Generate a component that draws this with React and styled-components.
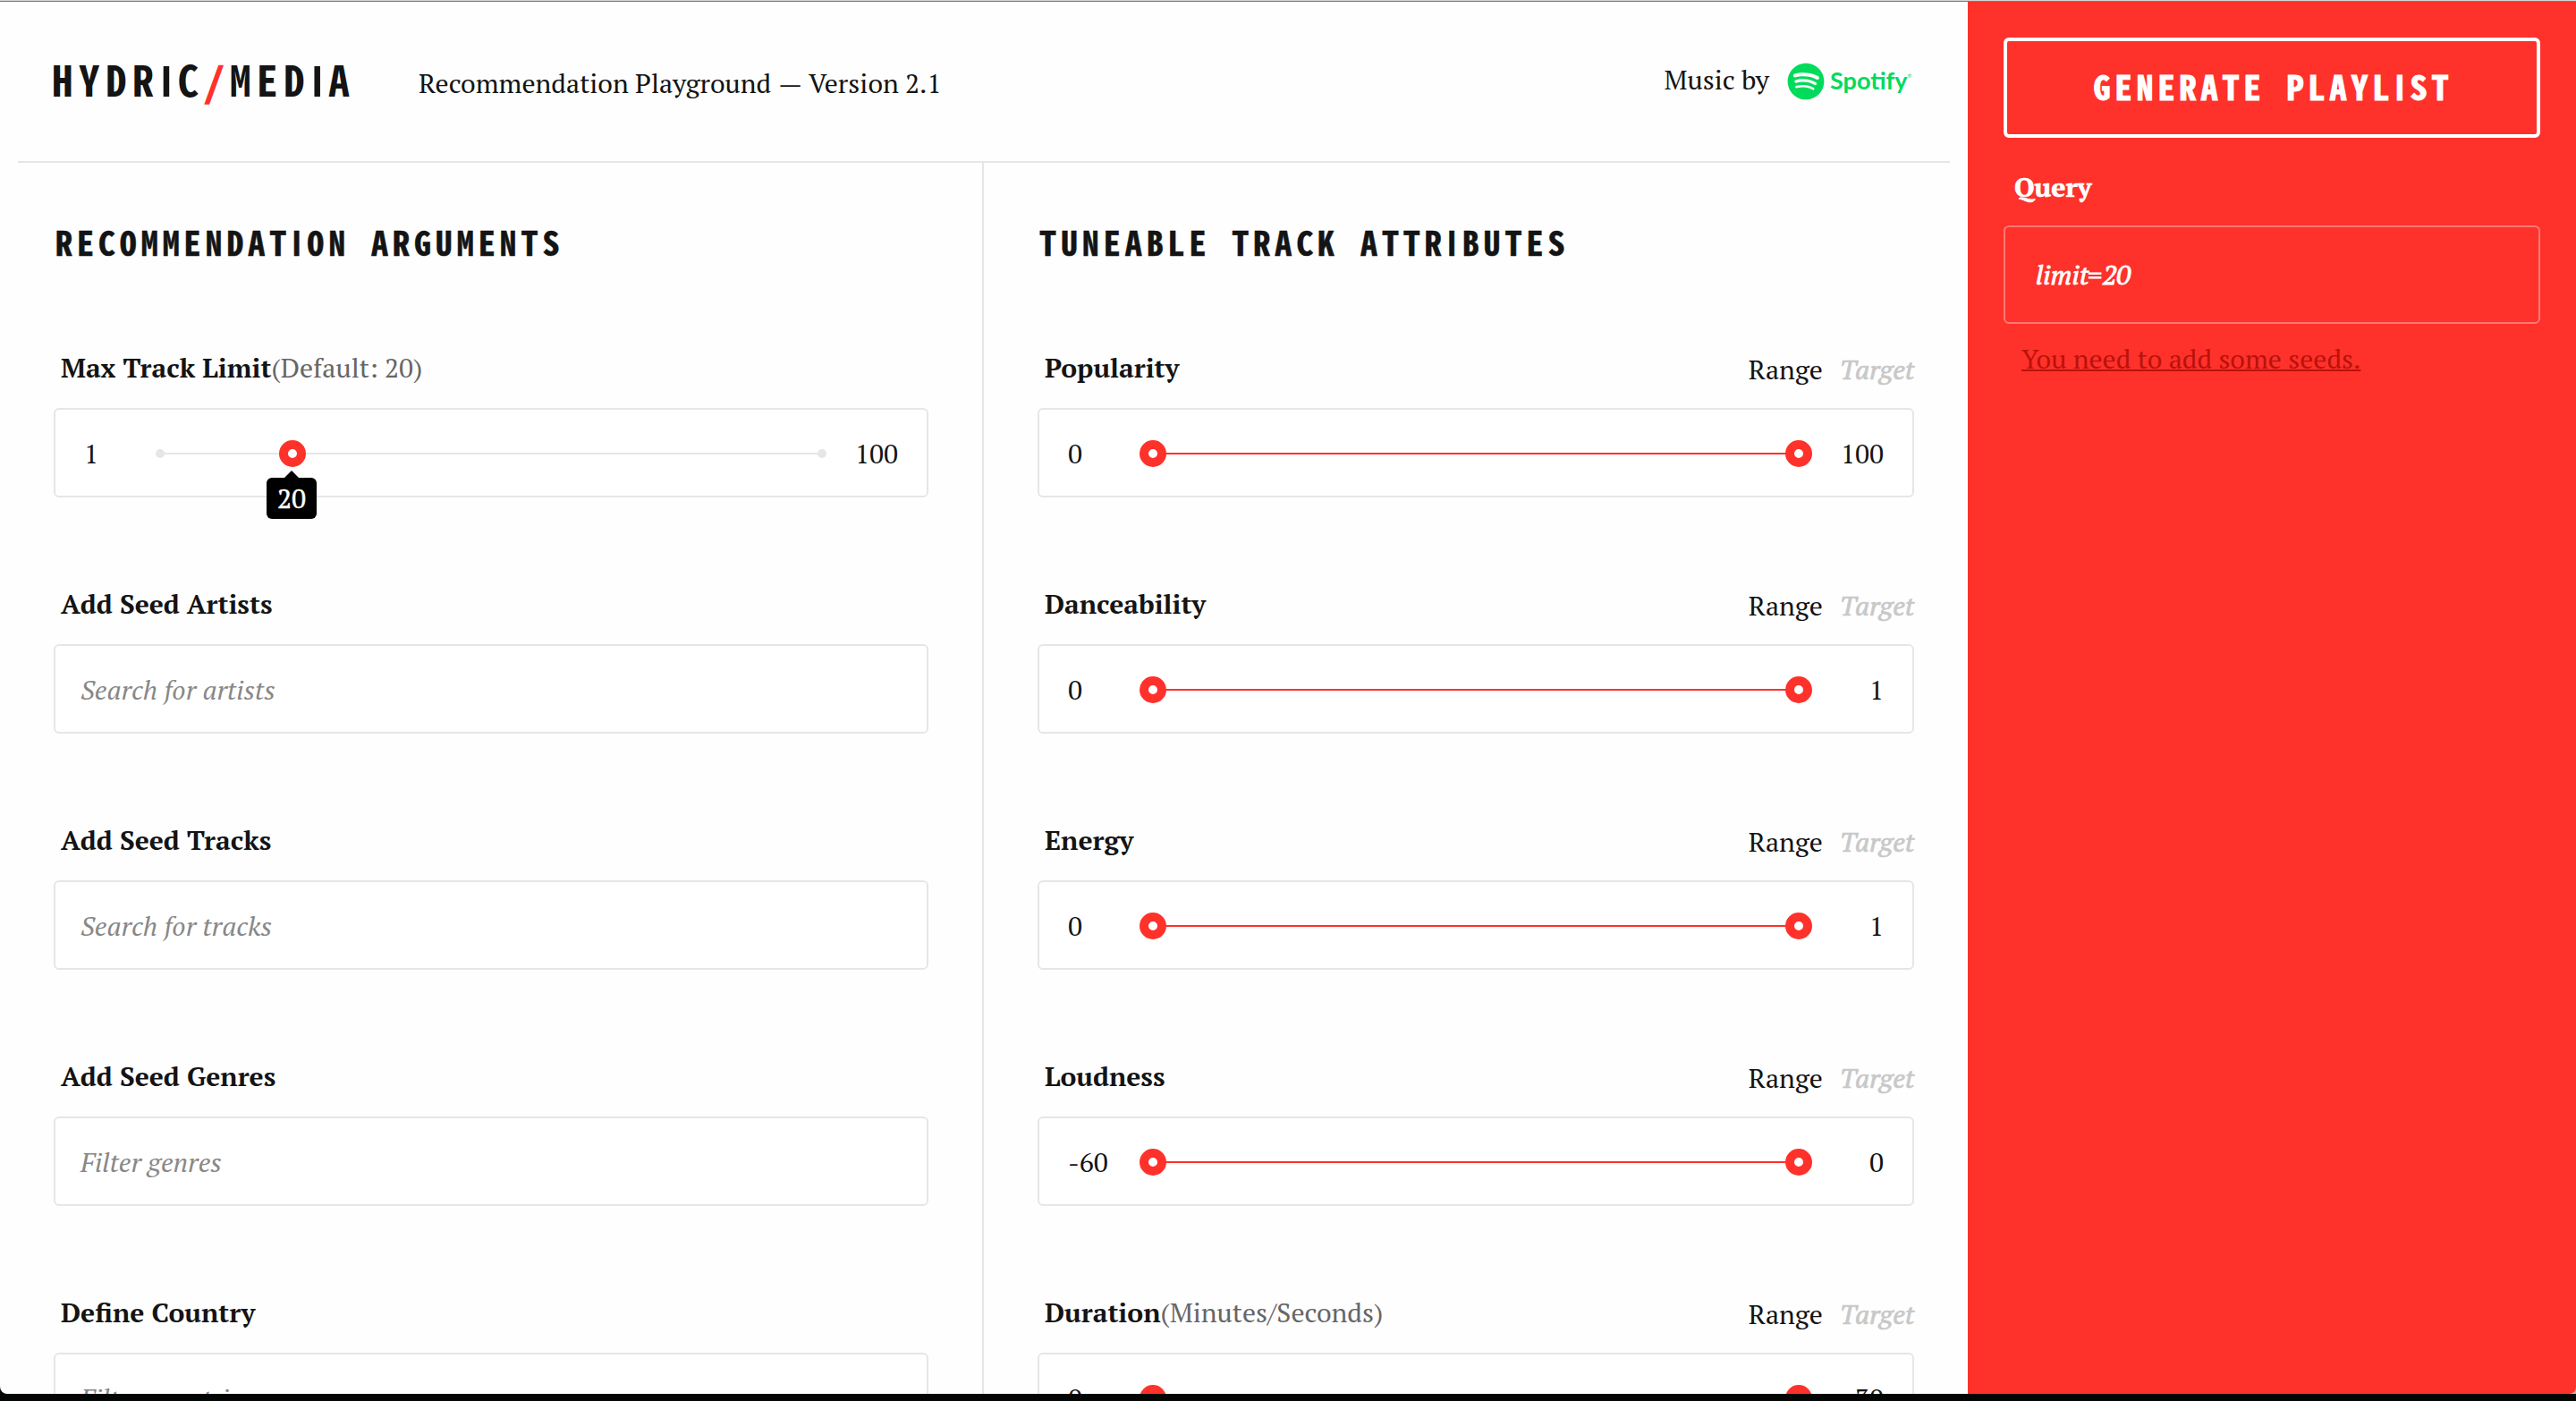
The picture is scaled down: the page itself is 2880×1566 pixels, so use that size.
import styled, { createGlobalStyle } from "styled-components";
import { FaSpotify } from "react-icons/fa";

const RED = "#ff312b";
const INK = "#141414";
const LINE = "#e6e6e6";

const GlobalStyle = createGlobalStyle`
  * {
    box-sizing: border-box;
  }
  body {
    margin: 0;
    background: #030605;
    overflow: hidden;
  }
`;

const Screen = styled.div`
  width: 2880px;
  height: 1566px;
  background: linear-gradient(#bdbdbd, #bdbdbd) 2872px 1550px / 8px 8px no-repeat
    #030605;
  font-family: "PT Serif", "Noto Serif", "Liberation Serif", serif;
  font-size: 30px;
  line-height: 40px;
  color: ${INK};
`;

const Window = styled.div`
  display: flex;
  height: 1558px;
  overflow: hidden;
  border-radius: 0 0 7px 8px;
  background: #fefefe;
`;

const TopEdge = styled.div`
  height: 2px;
  margin-bottom: -2px;
  position: relative;
  background: linear-gradient(#d2d2d2 50%, #7c7c7c 50%);
`;

const Main = styled.main`
  width: 2200px;
  display: flex;
  flex-direction: column;
`;

const Header = styled.header`
  flex: none;
  height: 182px;
  margin: 0 20px;
  padding: 0 40px 0 38px;
  border-bottom: 2px solid ${LINE};
  display: flex;
  align-items: flex-start;
`;

const Mono = styled.span`
  font-family: "Noto Sans Mono CJK SC", "DejaVu Sans Mono", monospace;
  font-weight: 700;
  white-space: pre;
`;

const Logo = styled(Mono)`
  width: 410px;
  padding-top: 68px;
  font-size: 47px;
  letter-spacing: 6.6px;
`;

const Slash = styled.span`
  display: inline-block;
  width: 28.5px;
  font-size: 43px;
  letter-spacing: 0;
  -webkit-text-stroke: 1.4px;
  color: ${RED};
`;

const Stem = styled.span`
  display: inline-block;
  width: ${({ $cell }) => $cell}px;
  padding-right: 5px;
  font-family: Roboto, sans-serif;
  font-size: 1.03em;
  font-weight: 600;
  letter-spacing: 0;
  text-align: center;
`;

const Subtitle = styled.span`
  padding-top: 73px;
`;

const Dash = styled.span`
  margin: 0 0.6px 0 0.8px;
`;

const Credit = styled.div`
  margin-left: auto;
  padding-top: 69px;
  display: flex;
`;

const SpotifyLogo = styled.div`
  margin: 1px 0 0 20px;
  width: 142px;
  display: flex;
  align-items: flex-start;
  color: #00db5b;
`;

const Wordmark = styled.span`
  margin-left: 6px;
  font: 700 27px/40px Lato, sans-serif;
`;

const Registered = styled.sup`
  font: 6px/30px Lato, sans-serif;
`;

const Columns = styled.div`
  flex: 1;
  display: flex;
`;

const Column = styled.section`
  width: 1100px;
  padding: 0 60px;
  border-right: ${({ $divided }) => ($divided ? `2px solid ${LINE}` : "0")};
`;

const Heading = styled.h2`
  margin: 0;
  height: 208px;
  padding: 68px 0 0 2px;
  font-family: "Noto Sans Mono CJK SC", "DejaVu Sans Mono", monospace;
  font-size: 38px;
  letter-spacing: 4.93px;
  -webkit-text-stroke: 0.5px;
`;

const Field = styled.div`
  height: 264px;
`;

const FieldHead = styled.div`
  height: 66px;
  padding: 1px 0 0 8px;
  display: flex;
`;

const Label = styled.label`
  font-weight: 700;
`;

const Hint = styled.span`
  color: #666;
`;

const Modes = styled.div`
  margin-left: auto;
  padding-top: 2px;
  display: flex;
  gap: 19px;
`;

const Mode = styled.span`
  color: ${({ $active }) => ($active ? INK : "#c8c8c8")};
  font-style: ${({ $active }) => ($active ? "normal" : "italic")};
  -webkit-text-stroke: ${({ $active }) => ($active ? "0" : "0.7px")};
`;

const Box = styled.div`
  height: 100px;
  border: 2px solid ${LINE};
  border-radius: 6px;
  background: #fff;
`;

const SearchBox = styled(Box)`
  padding: 29px 28px;
  font-style: italic;
  color: #888;
`;

const SliderBox = styled(Box)`
  padding: 0 32px;
  display: grid;
  grid-template-columns: 80px 1fr 80px;
  align-items: center;
`;

const Bound = styled.span`
  padding-top: 2px;
  text-align: ${({ $end }) => ($end ? "right" : "left")};
`;

const Rail = styled.div`
  height: 30px;
  margin-top: 2px;
  display: flex;
  align-items: center;
  justify-content: space-between;
  background: linear-gradient(${({ $color }) => $color} 0 0) center / calc(100% - 6px)
    2px no-repeat;
  position: relative;
`;

const Dot = styled.span`
  width: 10px;
  height: 10px;
  border-radius: 50%;
  background: ${LINE};
`;

const Handle = styled.span`
  width: 30px;
  height: 30px;
  border: 10px solid ${RED};
  border-radius: 50%;
  background: #fff;
`;

const Thumb = styled.div`
  position: absolute;
  top: 0;
  left: calc(5px + (100% - 10px) * 0.2);
  transform: translateX(-50%);
  display: flex;
  flex-direction: column;
  align-items: center;
`;

const Tip = styled.div`
  margin: 4px 2px 0 0;
  display: flex;
  flex-direction: column;
  align-items: center;

  &::before {
    content: "";
    border: 8px solid transparent;
    border-top: 0;
    border-bottom-color: #000;
  }
`;

const TipValue = styled.span`
  width: 56px;
  height: 46px;
  padding-top: 3px;
  border-radius: 6px;
  background: #000;
  color: #fff;
  text-align: center;
  -webkit-text-stroke: 0.4px;
`;

const Side = styled.aside`
  flex: 1;
  padding: 42px 40px;
  background: ${RED};
  color: #fff;
`;

const Generate = styled.button`
  display: block;
  width: 600px;
  height: 112px;
  padding: 0 0 2px 3px;
  border: 4px solid #fff;
  border-radius: 6px;
  background: none;
  color: #fff;
  font-size: 38px;
  line-height: 40px;
  letter-spacing: 5px;
  -webkit-text-stroke: 1px;
`;

const QueryTitle = styled.div`
  margin: 35px 0 23px 12px;
  font-weight: 700;
  -webkit-text-stroke: 0.7px;
`;

const QueryBox = styled.div`
  height: 110px;
  padding: 33px 34px;
  border: 2px solid rgba(255, 255, 255, 0.35);
  border-radius: 6px;
  font-style: italic;
  -webkit-text-stroke: 0.8px;
`;

const Warning = styled.p`
  margin: 19px 0 0 20px;
  color: #b9120b;
  text-decoration: underline;
  text-decoration-thickness: 2px;
`;

// the I is a bare stem on a narrower cell than the other letters
const MonoText = ({ children, stem = 18 }) =>
  children
    .split(/(I)/)
    .map((part, i) => (part === "I" ? <Stem key={i} $cell={stem}>I</Stem> : part));

const Slider = ({ min, max }) => (
  <SliderBox>
    <Bound>{min}</Bound>
    <Rail $color={RED}>
      <Handle />
      <Handle />
    </Rail>
    <Bound $end>{max}</Bound>
  </SliderBox>
);

const LimitSlider = () => (
  <SliderBox>
    <Bound>1</Bound>
    <Rail $color={LINE}>
      <Dot />
      <Dot />
      <Thumb>
        <Handle />
        <Tip>
          <TipValue>20</TipValue>
        </Tip>
      </Thumb>
    </Rail>
    <Bound $end>100</Bound>
  </SliderBox>
);

const searches = [
  { label: "Add Seed Artists", placeholder: "Search for artists" },
  { label: "Add Seed Tracks", placeholder: "Search for tracks" },
  { label: "Add Seed Genres", placeholder: "Filter genres" },
  { label: "Define Country", placeholder: "Filter countries" },
];

const attributes = [
  { label: "Popularity", min: "0", max: "100" },
  { label: "Danceability", min: "0", max: "1" },
  { label: "Energy", min: "0", max: "1" },
  { label: "Loudness", min: "-60", max: "0" },
  { label: "Duration", hint: "(Minutes/Seconds)", min: "0", max: "30" },
];

const App = () => (
  <Screen>
    <GlobalStyle />
    <TopEdge />
    <Window>
      <Main>
        <Header>
          <Logo>
            <MonoText stem={20}>HYDRIC</MonoText>
            <Slash>/</Slash>
            <MonoText stem={20}>MEDIA</MonoText>
          </Logo>
          <Subtitle>
            Recommendation Playground <Dash>—</Dash> Version 2.1
          </Subtitle>
          <Credit>
            Music by
            <SpotifyLogo>
              <FaSpotify size={42} />
              <Wordmark>Spotify</Wordmark>
              <Registered>®</Registered>
            </SpotifyLogo>
          </Credit>
        </Header>
        <Columns>
          <Column $divided>
            <Heading>
              <MonoText>RECOMMENDATION ARGUMENTS</MonoText>
            </Heading>
            <Field>
              <FieldHead>
                <Label>Max Track Limit</Label>
                <Hint>(Default: 20)</Hint>
              </FieldHead>
              <LimitSlider />
            </Field>
            {searches.map(({ label, placeholder }) => (
              <Field key={label}>
                <FieldHead>
                  <Label>{label}</Label>
                </FieldHead>
                <SearchBox>{placeholder}</SearchBox>
              </Field>
            ))}
          </Column>
          <Column>
            <Heading>
              <MonoText>TUNEABLE TRACK ATTRIBUTES</MonoText>
            </Heading>
            {attributes.map(({ label, hint, min, max }) => (
              <Field key={label}>
                <FieldHead>
                  <Label>{label}</Label>
                  {hint && <Hint>{hint}</Hint>}
                  <Modes>
                    <Mode $active>Range</Mode>
                    <Mode>Target</Mode>
                  </Modes>
                </FieldHead>
                <Slider min={min} max={max} />
              </Field>
            ))}
          </Column>
        </Columns>
      </Main>
      <Side>
        <Generate>
          <Mono>
            <MonoText>GENERATE PLAYLIST</MonoText>
          </Mono>
        </Generate>
        <QueryTitle>Query</QueryTitle>
        <QueryBox>limit=20</QueryBox>
        <Warning>You need to add some seeds.</Warning>
      </Side>
    </Window>
  </Screen>
);

export default App;
